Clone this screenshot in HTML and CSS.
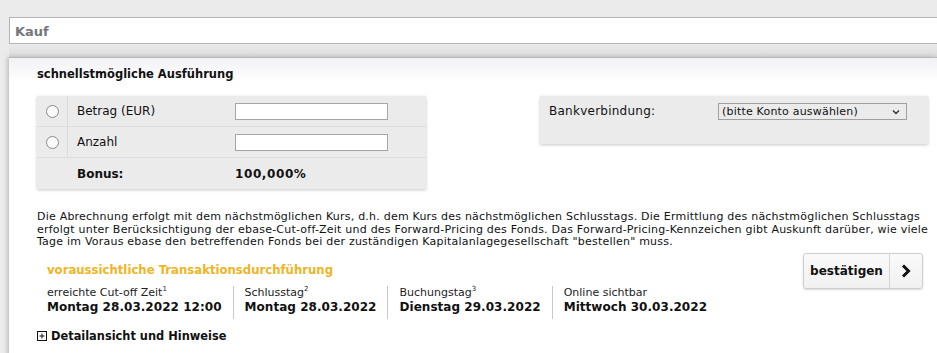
FILE: index.html
```
<!DOCTYPE html>
<html lang="de">
<head>
<meta charset="utf-8">
<link rel="stylesheet" href="styles.css">
</head>
<body>
<div class="kauf-bar">Kauf</div>
<div class="band"></div>
<div class="panel">
  <h2 class="section-title">schnellstmögliche Ausführung</h2>
  <div class="boxes">
    <div class="box box-left">
      <div class="row">
        <div class="radio-cell"><span class="radio"></span></div>
        <div class="label">Betrag (EUR)</div>
        <div class="field"><span class="input"></span></div>
      </div>
      <div class="row">
        <div class="radio-cell"><span class="radio"></span></div>
        <div class="label">Anzahl</div>
        <div class="field"><span class="input"></span></div>
      </div>
      <div class="row row-bonus">
        <div class="radio-cell empty"></div>
        <div class="label bold">Bonus:</div>
        <div class="field bold num">100,000%</div>
      </div>
    </div>
    <div class="box box-right">
      <div class="bank-label">Bankverbindung:</div>
      <div class="select">
        <span>(bitte Konto auswählen)</span>
        <svg class="chev" width="8" height="6" viewBox="0 0 8 6"><path d="M1 1.5 L4 4.5 L7 1.5" fill="none" stroke="#333" stroke-width="1.4"/></svg>
      </div>
    </div>
  </div>
  <p class="info">Die Abrechnung erfolgt mit dem nächstmöglichen Kurs, d.h. dem Kurs des nächstmöglichen Schlusstags. Die Ermittlung des nächstmöglichen Schlusstags erfolgt unter Berücksichtigung der ebase-Cut-off-Zeit und des Forward-Pricing des Fonds. Das Forward-Pricing-Kennzeichen gibt Auskunft darüber, wie viele Tage im Voraus ebase den betreffenden Fonds bei der zuständigen Kapitalanlagegesellschaft "bestellen" muss.</p>
  <div class="tx">
    <div class="tx-main">
      <h3 class="tx-title">voraussichtliche Transaktionsdurchführung</h3>
      <div class="dates">
        <div class="date">
          <div class="d-label">erreichte Cut-off Zeit<sup>1</sup></div>
          <div class="d-value">Montag 28.03.2022 12:00</div>
        </div>
        <div class="date">
          <div class="d-label">Schlusstag<sup>2</sup></div>
          <div class="d-value">Montag 28.03.2022</div>
        </div>
        <div class="date">
          <div class="d-label">Buchungstag<sup>3</sup></div>
          <div class="d-value">Dienstag 29.03.2022</div>
        </div>
        <div class="date">
          <div class="d-label">Online sichtbar</div>
          <div class="d-value">Mittwoch 30.03.2022</div>
        </div>
      </div>
    </div>
    <div class="confirm">
      <span class="confirm-text">bestätigen</span>
      <span class="confirm-arrow"><svg width="10" height="14" viewBox="0 0 10 14"><path d="M2 1.5 L7.5 7 L2 12.5" fill="none" stroke="#111" stroke-width="3"/></svg></span>
    </div>
  </div>
  <div class="details">
    <svg class="plus" width="10" height="10" viewBox="0 0 10 10"><rect x="0.5" y="0.5" width="9" height="9" fill="#fff" stroke="#111"/><path d="M5 2.5 V7.5 M2.5 5 H7.5" stroke="#111" stroke-width="1"/></svg>
    <span>Detailansicht und Hinweise</span>
  </div>
</div>
</body>
</html>
```
FILE: styles.css
```
* { box-sizing: border-box; }
html, body { margin: 0; padding: 0; }
body {
  background: #ebebeb;
  font-family: "DejaVu Sans", Verdana, sans-serif;
  color: #111;
  width: 937px;
  height: 353px;
  overflow: hidden;
}
.kauf-bar {
  margin: 17px 0 0 9px;
  height: 27px;
  border: 1px solid #b4b4b4;
  border-right: none;
  background: #fff;
  font-weight: bold;
  font-size: 13px;
  color: #76767e;
  padding: 6px 0 0 5px;
}
.band {
  height: 13px;
  margin-left: 9px;
  background: linear-gradient(#ebebeb, #dadada);
}
.panel {
  margin-left: 9px;
  border-top: 1px solid #b8b8b8;
  background: linear-gradient(#f2f2f5, #ffffff 24px);
  box-shadow: -2px 0 4px rgba(0,0,0,0.18);
  height: 300px;
  padding: 0 0 0 28px;
}
.section-title {
  margin: 0;
  padding-top: 9px;
  font-size: 11.5px;
  font-weight: bold;
  line-height: 15px;
  height: 38px;
}
.boxes {
  display: flex;
  align-items: flex-start;
}
.box {
  background: #ebebeb;
  box-shadow: 0 1px 3px rgba(0,0,0,0.22);
  font-size: 12px;
}
.box-left { width: 389px; }
.row {
  display: flex;
  height: 31px;
  align-items: stretch;
  border-bottom: 1px solid #dedede;
}
.row:last-child { border-bottom: none; }
.radio-cell {
  width: 31px;
  border-right: 1px solid #dcdcdc;
  display: flex;
  align-items: center;
  justify-content: center;
}
.radio-cell.empty { border-right: none; }
.radio {
  width: 13px;
  height: 13px;
  border-radius: 50%;
  border: 1.5px solid #8a8a8a;
  background: #fbfbfb;
}
.label {
  width: 167px;
  padding-left: 9px;
  display: flex;
  align-items: center;
}
.field {
  display: flex;
  align-items: center;
}
.bold { font-weight: bold; }
.num { letter-spacing: 0.6px; }
.input {
  width: 153px;
  height: 17px;
  border: 1px solid #a6a6a6;
  background: #fff;
}
.box-right {
  width: 388px;
  height: 48px;
  margin-left: 114px;
  display: flex;
  align-items: flex-start;
  padding: 7px 0 0 9px;
}
.bank-label {
  width: 169px;
  line-height: 17px;
  letter-spacing: 0.25px;
}
.select {
  width: 189px;
  height: 17px;
  border: 1px solid #a0a0a0;
  background: #ebebeb;
  font-size: 11px;
  letter-spacing: 0.2px;
  line-height: 15px;
  padding-left: 3px;
  display: flex;
  justify-content: space-between;
  align-items: center;
  padding-right: 6px;
}
.info {
  margin: 22px 0 0 0;
  width: 895px;
  font-size: 11px;
  letter-spacing: 0.22px;
  line-height: 12.5px;
}
.tx {
  display: flex;
  margin-top: 4px;
}
.tx-main { padding-left: 10px; width: 766px; }
.tx-title {
  margin: 0;
  font-size: 11.7px;
  line-height: 16px;
  color: #f0b424;
  font-weight: bold;
  padding-top: 9px;
  height: 33px;
}
.dates { display: flex; }
.date {
  padding: 0 11px;
  border-left: 1px solid #c8c8c8;
  height: 33px;
}
.date:first-child { padding-left: 0; border-left: none; }
.d-label {
  font-size: 11px;
  line-height: 13px;
  color: #222;
}
.d-label sup { font-size: 7px; line-height: 0; vertical-align: 5px; }
.d-value {
  font-size: 12px;
  font-weight: bold;
  letter-spacing: 0.04px;
  line-height: 16px;
}
.confirm {
  display: flex;
  height: 36px;
  width: 120px;
  border: 1px solid #cdcdcd;
  border-radius: 3px;
  background: linear-gradient(#fafafa, #f1f1f1);
  box-shadow: 0 1px 2px rgba(0,0,0,0.15);
}
.confirm-text {
  width: 86px;
  border-right: 1px solid #d4d4d4;
  display: flex;
  align-items: center;
  justify-content: center;
  font-weight: bold;
  font-size: 12px;
}
.confirm-arrow {
  flex: 1;
  display: flex;
  align-items: center;
  justify-content: center;
}
.details {
  display: flex;
  align-items: center;
  gap: 4px;
  margin-top: 10px;
  font-size: 11.4px;
  font-weight: bold;
}
```
